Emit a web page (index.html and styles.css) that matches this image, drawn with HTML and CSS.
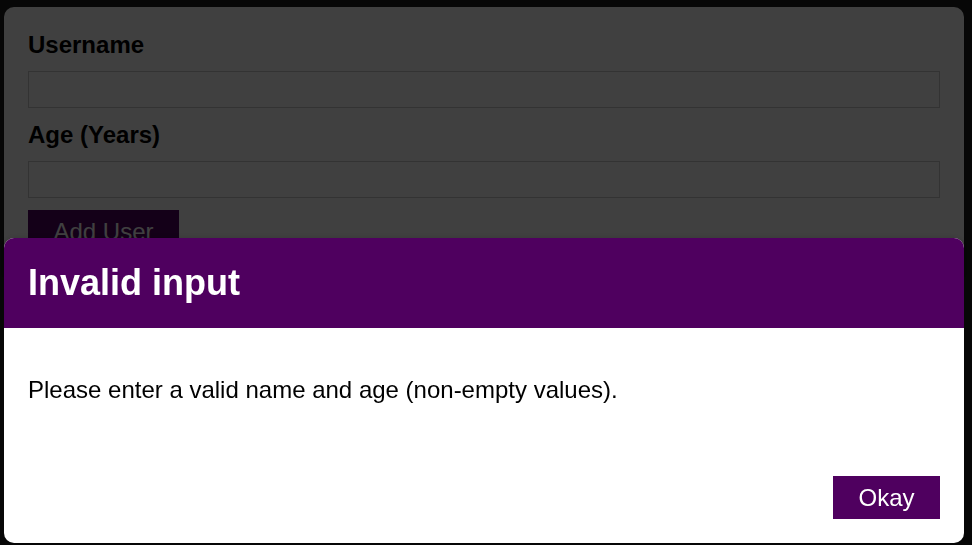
FILE: index.html
```html
<!DOCTYPE html>
<html lang="en">
<head>
<meta charset="utf-8">
<title>Add User</title>
<link rel="stylesheet" href="styles.css">
</head>
<body>
  <div class="card input-card">
    <form class="user-form">
      <label class="field-label" for="username">Username</label>
      <input class="field-input" id="username" type="text">
      <label class="field-label field-label-second" for="age">Age (Years)</label>
      <input class="field-input" id="age" type="number">
      <button class="button" type="submit">Add User</button>
    </form>
  </div>

  <div class="backdrop"></div>
  <div class="modal">
    <header class="modal-header">
      <h2 class="modal-title">Invalid input</h2>
    </header>
    <div class="modal-content">
      <p class="modal-text">Please enter a valid name and age (non-empty values).</p>
    </div>
    <footer class="modal-actions">
      <button class="button" type="button">Okay</button>
    </footer>
  </div>
</body>
</html>
```

FILE: styles.css
```css
html {
  font-family: "Liberation Sans", Arial, sans-serif;
  font-size: 24px;
}

body {
  margin: 0;
  background: #1f1f1f;
}

.card {
  background: #ffffff;
  box-shadow: 0 2px 8px rgba(0, 0, 0, 0.26);
  border-radius: 10px;
}

.input-card {
  margin: 7px 8px 0 4px;
  padding: 24px;
}

.user-form {
  display: flex;
  flex-direction: column;
  align-items: flex-start;
}

.field-label {
  display: block;
  font-weight: bold;
  color: #000;
  margin-bottom: 12px;
}

.field-label-second {
  margin-top: 1px;
}

.field-input {
  font: inherit;
  display: block;
  box-sizing: border-box;
  width: 100%;
  border: 1px solid #ccc;
  padding: 3.6px;
  margin: 0 0 12px 0;
  background: #fff;
}

.button {
  font: inherit;
  border: 1px solid #4f005f;
  background: #4f005f;
  color: #ffffff;
  padding: 6.5px 24.5px;
  margin: 0;
  cursor: pointer;
}

.backdrop {
  position: fixed;
  top: 0;
  left: 0;
  width: 100%;
  height: 100vh;
  z-index: 10;
  background: rgba(0, 0, 0, 0.75);
}

.modal {
  position: fixed;
  top: 238px;
  left: 4px;
  width: 960px;
  z-index: 100;
  overflow: hidden;
  background: #ffffff;
  border-radius: 10px;
  box-shadow: 0 2px 8px rgba(0, 0, 0, 0.26);
}

.modal-header {
  background: #4f005f;
  padding: 24px;
}

.modal-title {
  margin: 0;
  color: #ffffff;
  font-size: 36px;
  font-weight: bold;
}

.modal-content {
  padding: 24px;
}

.modal-text {
  margin: 24px 0;
  color: #000;
}

.modal-actions {
  padding: 24px;
  display: flex;
  justify-content: flex-end;
}
```
